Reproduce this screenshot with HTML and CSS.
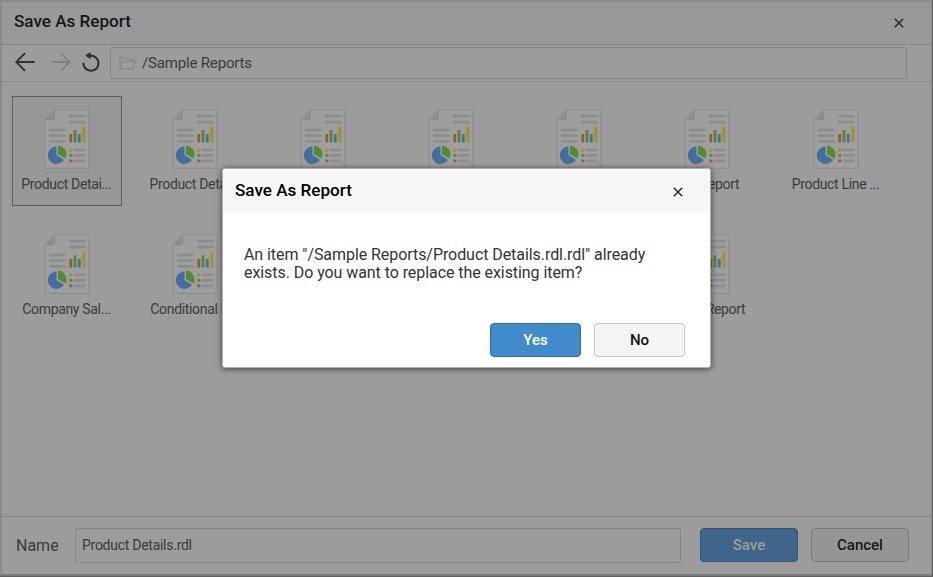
FILE: index.html
```html
<!DOCTYPE html>
<html lang="en">
<head>
<meta charset="utf-8">
<title>Save As Report</title>
<link rel="stylesheet" href="styles.css">
</head>
<body>
<svg width="0" height="0" class="defs">
  <symbol id="report" viewBox="0 0 46 60">
    <path d="M11 1H45V59.300H1V11Z" fill="#9e9e9e" stroke="#8f8f90" stroke-width="1.200"/>
    <path d="M11 1V11H1Z" fill="#8b8c8e"/>
    <path d="M25 7.200H41.500M25 13H41.500M5 21H21.500M5 26.500H21.500M5 32.200H21.500M30 41H41.500M30 46.300H41.500M30 52H41.500" stroke="#8b8c8e" stroke-width="2.500"/>
    <path d="M26.700 25V33.500" stroke="#9b5b37" stroke-width="2.800"/>
    <path d="M31 21.300V33.500" stroke="#568a2d" stroke-width="3"/>
    <path d="M35.300 25V33.500" stroke="#426f9f" stroke-width="2.800"/>
    <path d="M39.800 17.500V33.500" stroke="#a6902f" stroke-width="3"/>
    <path d="M12.500 46.300V37.600A8.700 8.700 0 1 0 20 50.700Z" fill="#426f9f"/>
    <path d="M14 45.200V36.700A8.700 8.700 0 0 1 21.400 49.500Z" fill="#568a2d"/>
    <rect x="25.300" y="39.500" width="3.200" height="3" rx=".8" fill="#a6902f"/>
    <rect x="25.300" y="45" width="3.200" height="2.800" rx=".8" fill="#568a2d"/>
    <rect x="25.300" y="50.500" width="3.200" height="2.800" rx=".8" fill="#9b5b37"/>
  </symbol>
</svg>
<main class="window">
  <header class="titlebar">
    <h1>Save As Report</h1>
    <svg class="close" viewBox="0 0 10 10"><path d="M.8.8 9.200 9.200M9.200.8.8 9.200"/></svg>
  </header>
  <nav class="toolbar">
    <svg class="back" viewBox="0 0 20 20"><path d="M19.500 10H1.200M10 1.200 1.200 10 10 18.800"/></svg>
    <svg class="forward" viewBox="0 0 20 20"><path d="M.5 10H18.800M10 1.200 18.800 10 10 18.800"/></svg>
    <svg class="reload" viewBox="0 0 18 20"><path d="M1.300 10.800A7.600 7.600 0 1 0 8.900 3.600H5.500"/><path class="tip" d="M3.200 3.600 8.600 0V7.200Z"/></svg>
    <div class="path">
      <svg class="folder" viewBox="0 0 17 14"><path d="M1 12.500V1.500H6L7.500 3.500H14V5.500M1 12.500 3.500 5.500H16.200L14 12.800H1Z"/></svg>
      <span>/Sample Reports</span>
    </div>
  </nav>
  <section class="files">
    <div class="tile selected"><svg><use href="#report"/></svg><span>Product Detai...</span></div>
    <div class="tile"><svg><use href="#report"/></svg><span>Product Detai...</span></div>
    <div class="tile"><svg><use href="#report"/></svg></div>
    <div class="tile"><svg><use href="#report"/></svg></div>
    <div class="tile"><svg><use href="#report"/></svg></div>
    <div class="tile"><svg><use href="#report"/></svg><span class="tail">Report</span></div>
    <div class="tile"><svg><use href="#report"/></svg><span>Product Line ...</span></div>
    <div class="tile"><svg><use href="#report"/></svg><span>Company Sal...</span></div>
    <div class="tile"><svg><use href="#report"/></svg><span>Conditional R...</span></div>
    <div class="tile"></div>
    <div class="tile"></div>
    <div class="tile"></div>
    <div class="tile"><svg><use href="#report"/></svg><span class="tail wide">Report</span></div>
  </section>
  <footer class="footer">
    <label>Name</label>
    <div class="field">Product Details.rdl</div>
    <button class="save">Save</button>
    <button class="cancel">Cancel</button>
  </footer>
</main>
<div class="dialog">
  <header class="dialog-head">
    <h2>Save As Report</h2>
    <svg class="close" viewBox="0 0 10 10"><path d="M.8.8 9.200 9.200M9.200.8.8 9.200"/></svg>
  </header>
  <p>An item "/Sample Reports/Product Details.rdl.rdl" already<br>exists. Do you want to replace the existing item?</p>
  <div class="actions">
    <button class="yes">Yes</button>
    <button class="no">No</button>
  </div>
</div>
</body>
</html>
```
FILE: styles.css
```css
* { box-sizing: border-box; }
body { margin: 0; width: 933px; height: 577px; overflow: hidden; position: relative; background: #606060; font-family: Roboto, sans-serif; color: #3b3b3b; }
.defs { position: absolute; }
h1, h2, p { margin: 0; font-weight: 500; }
button { font: 500 15px Roboto, sans-serif; border-radius: 4px; padding: 0; }
.window { width: 932px; height: 576px; display: flex; flex-direction: column; background: #9c9c9c; border: 2px solid #8b8b8b; border-width: 2px 1px 2px 2px; border-bottom-color: #7b7b7b; }
.titlebar { height: 43px; flex: none; display: flex; justify-content: space-between; align-items: center; padding: 0 27px 0 12px; background: #999; border-bottom: 1px solid #868686; }
h1 { font-size: 17.1px; line-height: 20px; color: #161616; margin-top: -4px; }
.close { width: 10px; height: 10px; fill: none; stroke: #292929; stroke-width: 1.5; }
.toolbar { height: 37px; flex: none; display: flex; align-items: center; padding-left: 13px; border-bottom: 1px solid #8b8b8b; }
.toolbar svg { flex: none; fill: none; stroke: #303030; stroke-width: 1.8; }
.toolbar .back, .toolbar .forward { width: 20px; height: 20px; margin-top: -2px; }
.toolbar .forward { margin-left: 16px; stroke: #818181; }
.reload { width: 18px; height: 20px; margin-left: 11px; margin-top: -2px; }
.toolbar .reload { stroke-width: 2.1; }
.toolbar .tip { fill: #303030; stroke: none; }
.path { width: 797px; height: 32px; margin-left: 10px; display: flex; align-items: center; gap: 6px; padding-left: 8px; border: 1px solid #868686; border-radius: 2px; font-size: 15px; letter-spacing: -.17px; }
.toolbar .folder { width: 17px; height: 14px; stroke: #858585; stroke-width: 1.1; }
.files { flex: 1; display: grid; grid-template-columns: repeat(7, 128.2px); grid-template-rows: 125px 125px; padding: 14px 0 0 9.5px; overflow: hidden; }
.tile { width: 110px; height: 110px; display: flex; flex-direction: column; align-items: center; padding-top: 12px; border: 1px solid transparent; }
.tile.selected { border: 1px solid #5d5d5d; background: #979797; }
.tile svg { width: 46px; height: 60px; flex: none; }
.tile span { font-size: 14px; letter-spacing: -.33px; line-height: 18px; margin-top: 6px; white-space: nowrap; }
.tile .tail { padding-left: 24px; }
.tile .wide { padding-left: 36px; }
.footer { height: 58px; flex: none; display: flex; align-items: center; border-top: 1px solid #868686; padding: 0 0 2px 14px; }
.footer label { width: 59px; font-size: 16px; margin-top: 2px; }
.field { width: 606px; height: 35px; margin-top: 2px; border: 1px solid #868686; border-radius: 2px; padding-left: 6px; font-size: 14px; letter-spacing: -.27px; line-height: 33px; }
.footer button { width: 98px; height: 34px; }
.save { margin-left: 19px; background: #3f658a; border: 1px solid #305677; color: #9c9c9c; }
.cancel { margin-left: 13px; background: #959595; border: 1px solid #7c7c7c; color: #161616; }
.dialog { position: absolute; left: 222px; top: 168px; width: 489px; height: 200px; background: #fff; border: 1px solid #b0b0b0; border-radius: 3px; box-shadow: 0 1px 6px rgba(0,0,0,.6); overflow: hidden; color: #333; }
.dialog-head { height: 44px; display: flex; justify-content: space-between; align-items: center; background: #f7f7f7; padding: 0 27px 0 12px; }
h2 { font-size: 17.1px; line-height: 20px; color: #000; margin-top: -3px; }
.dialog .close { margin-top: 2px; }
.dialog p { font-size: 16px; letter-spacing: -.065px; line-height: 18px; font-weight: 400; padding: 33px 0 0 21px; white-space: nowrap; }
.actions { display: flex; justify-content: flex-end; gap: 13px; padding: 41px 25px 0 0; }
.actions button { width: 91px; height: 34px; }
.yes { background: #428bca; border: 1px solid #2d6ca2; color: #fff; }
.no { background: #f4f4f4; border: 1px solid #c4c4c4; color: #111; }
```
